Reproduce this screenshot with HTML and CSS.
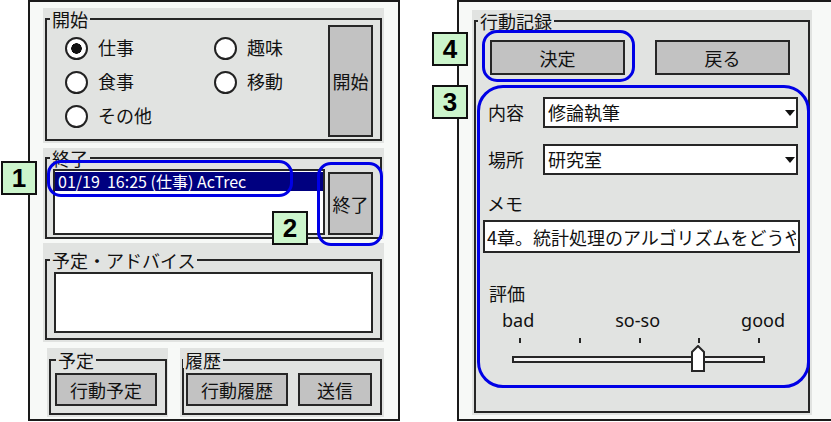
FILE: index.html
```html
<!DOCTYPE html>
<html lang="ja">
<head>
<meta charset="utf-8">
<title>行動記録</title>
<link rel="stylesheet" href="styles.css">
</head>
<body>
<div class="screen">

	<!-- メイン画面 -->
	<div class="panel left">
		<div class="grp start">
			<fieldset>
				<legend>開始</legend>
				<div class="startbody">
					<div class="radios">
						<label class="opt"><input type="radio" name="act" checked>仕事</label>
						<label class="opt"><input type="radio" name="act">趣味</label>
						<label class="opt"><input type="radio" name="act">食事</label>
						<label class="opt"><input type="radio" name="act">移動</label>
						<label class="opt"><input type="radio" name="act">その他</label>
					</div>
					<button class="btn tall">開始</button>
				</div>
			</fieldset>
		</div>

		<div class="grp end">
			<fieldset>
				<legend>終了</legend>
				<div class="endbody">
					<div class="list">
						<div class="sel">01/19  16:25 (仕事) AcTrec</div>
					</div>
					<button class="btn stop">終了</button>
				</div>
			</fieldset>
		</div>

		<div class="grp advice">
			<fieldset>
				<legend>予定・アドバイス</legend>
				<div class="note"></div>
			</fieldset>
		</div>

		<div class="bottomrow">
			<div class="grp plan">
				<fieldset>
					<legend>予定</legend>
					<button class="btn wide">行動予定</button>
				</fieldset>
			</div>
			<div class="grp hist">
				<fieldset>
					<legend>履歴</legend>
					<div class="btnrow">
						<button class="btn wide">行動履歴</button>
						<button class="btn send">送信</button>
					</div>
				</fieldset>
			</div>
		</div>
	</div>

	<!-- 行動記録画面 -->
	<div class="panel right">
		<div class="grp record">
			<fieldset>
				<legend>行動記録</legend>
				<div class="topbtns">
					<button class="btn big">決定</button>
					<button class="btn big">戻る</button>
				</div>

				<div class="field first">
					<span class="lbl">内容</span>
					<div class="combo"><span>修論執筆</span><span class="arrow"></span></div>
				</div>
				<div class="field second">
					<span class="lbl">場所</span>
					<div class="combo"><span>研究室</span><span class="arrow"></span></div>
				</div>

				<div class="cap memo-cap">メモ</div>
				<input class="memo" type="text" value="4章。統計処理のアルゴリズムをどうやって実装するか検討">

				<div class="cap eval-cap">評価</div>
				<div class="scale">
					<span>bad</span><span>so-so</span><span>good</span>
				</div>
				<div class="ticks">
					<i></i><i></i><i></i><i></i><i></i>
				</div>
				<div class="track">
					<svg class="thumb" width="14" height="27" viewBox="0 0 14 27">
						<polygon points="7,1 13,7 13,26 1,26 1,7" fill="#fff" stroke="#262626" stroke-width="2"/>
					</svg>
				</div>
			</fieldset>
		</div>
	</div>
</div>

<!-- 注釈 -->
<div class="ring r1"></div>
<div class="ring r2"></div>
<div class="ring r3"></div>
<div class="ring r4"></div>
<div class="tag t1">1</div>
<div class="tag t2">2</div>
<div class="tag t3">3</div>
<div class="tag t4">4</div>
</body>
</html>
```

FILE: styles.css
```css
* {
	box-sizing: border-box;
}

html, body {
	margin: 0;
}

body {
	position: relative;
	width: 831px;
	height: 422px;
	overflow: hidden;
	background: #fff;
	font-family: "Noto Sans CJK JP", "Noto Sans", sans-serif;
	font-size: 18px;
	line-height: 1.2;
	color: #111;
}

.screen {
	display: flex;
	gap: 57px;
	padding-left: 28px;
}

.panel {
	flex: none;
	height: 421px;
	border: 2px solid #1a1a1a;
	background: #f7f9f7;
}

.panel.left {
	width: 372px;
	padding: 6px 14px 0 13px;
	display: flex;
	flex-direction: column;
}

.panel.right {
	width: 380px;
	border-right: none;
	padding: 8px 0 0 13px;
}

/* グループ枠 */
.grp {
	background: #e1e3e1;
	padding: 3px 2px 2px 2px;
}

fieldset {
	margin: 0;
	min-width: 0;
	border: 2px solid #262626;
	padding: 0 7px 0 6px;
}

legend {
	padding: 0 2px;
	margin-left: -3px;
	font-size: 18px;
	line-height: 16px;
}

.btn {
	font-family: inherit;
	font-size: 18px;
	line-height: 1;
	color: #111;
	background: #c2c2c2;
	border: 2px solid #262626;
	border-radius: 0;
	padding: 0;
}

/* 開始 */
.startbody {
	display: flex;
	height: 112px;
}

.radios {
	flex: 1;
	display: grid;
	grid-template-columns: 149px auto;
	grid-auto-rows: 34px;
	align-content: start;
	padding: 4px 0 0 12px;
}

.opt {
	display: flex;
	align-items: center;
	gap: 10px;
}

.opt input {
	appearance: none;
	margin: 0;
	width: 23px;
	height: 23px;
	border: 2px solid #222;
	border-radius: 50%;
	background: #fff;
}

.opt input:checked {
	background: radial-gradient(circle, #111 0 5px, #fff 5.5px);
}

.btn.tall {
	width: 45px;
	margin: -2px 0 2px 0;
}

/* 終了 */
.grp.end {
	margin-top: 5px;
	padding-top: 2px;
	padding-bottom: 0;
}

.endbody {
	display: flex;
	align-items: flex-end;
	gap: 3px;
	padding-bottom: 2px;
}

.list {
	width: 272px;
	height: 66px;
	margin-top: 3px;
	border: 2px solid #262626;
	background: #fff;
	padding-top: 1px;
}

.list .sel {
	height: 19px;
	background: #000080;
	color: #fff;
	font-size: 16px;
	line-height: 19px;
	padding-left: 3px;
	white-space: pre;
}

.btn.stop {
	width: 45px;
	height: 63px;
}

/* 予定・アドバイス */
.grp.advice {
	margin-top: 4px;
	padding-top: 9px;
}

.grp.advice fieldset {
	padding-bottom: 5px;
}

.note {
	height: 61px;
	margin: 4px 0 0 1px;
	border: 2px solid #262626;
	background: #fff;
}

/* 予定 / 履歴 */
.bottomrow {
	display: flex;
	gap: 12px;
	margin-top: 6px;
	padding-left: 4px;
}

.grp.plan {
	width: 121px;
	padding: 4px 1px 2px 2px;
}

.grp.plan fieldset {
	padding: 0 8px 7px 4px;
}

.grp.plan legend {
	margin-left: 1px;
}

.grp.hist {
	width: 204px;
	padding: 4px 2px 2px 2px;
}

.grp.hist fieldset {
	padding: 0 8px 7px 2px;
}

.btnrow {
	display: flex;
	gap: 10px;
}

.btn.wide {
	width: 102px;
	height: 33px;
	margin-top: 5px;
}

.btn.send {
	width: 74px;
	height: 33px;
	margin-top: 5px;
}

/* 行動記録 */
.grp.record {
	width: 340px;
	height: 405px;
}

.grp.record fieldset {
	height: 100%;
	padding: 0 10px 0 7px;
}

.grp.record legend {
	margin-left: -5px;
}

.topbtns {
	display: flex;
	gap: 30px;
	margin-top: 11px;
	padding-left: 7px;
}

.btn.big {
	width: 135px;
	height: 35px;
}

.field {
	display: flex;
	align-items: center;
	padding-left: 5px;
}

.field.first {
	margin-top: 22px;
}

.field.second {
	margin-top: 16px;
}

.lbl {
	width: 55px;
}

.combo {
	display: flex;
	align-items: center;
	justify-content: space-between;
	width: 255px;
	height: 31px;
	border: 2px solid #262626;
	background: #fff;
	padding: 0 1px 0 3px;
}

.arrow {
	width: 0;
	height: 0;
	border-left: 5px solid transparent;
	border-right: 5px solid transparent;
	border-top: 6px solid #111;
}

.cap {
	line-height: 24px;
	padding-left: 4px;
}

.memo-cap {
	margin-top: 16px;
}

.memo {
	display: block;
	width: 317px;
	height: 33px;
	margin-top: 5px;
	border: 2px solid #262626;
	border-radius: 0;
	background: #fff;
	padding: 0 2px;
	font-family: inherit;
	font-size: 18px;
	color: #111;
	outline: none;
}

.eval-cap {
	margin-top: 28px;
	padding-left: 6px;
}

.scale {
	display: flex;
	justify-content: space-between;
	width: 283px;
	margin: 4px 0 0 19px;
	font-family: "Noto Sans", sans-serif;
	line-height: 22px;
}

.ticks {
	display: flex;
	justify-content: space-between;
	width: 241px;
	height: 5px;
	margin: 7px 0 0 36px;
}

.ticks i {
	width: 2px;
	height: 5px;
	background: #262626;
}

.track {
	position: relative;
	width: 253px;
	height: 7px;
	margin: 13px 0 0 29px;
	border: 2px solid #262626;
	background: #f4f4f4;
}

.thumb {
	position: absolute;
	left: 177px;
	top: -13px;
}

/* 注釈の枠と番号 */
.ring {
	position: absolute;
	border: 3px solid #0000e6;
	border-radius: 14px;
}

.r1 { left: 47px; top: 160px; width: 246px; height: 37px; }
.r2 { left: 317px; top: 162px; width: 66px; height: 84px; }
.r3 { left: 477px; top: 85px; width: 333px; height: 303px; border-radius: 26px; }
.r4 { left: 482px; top: 30px; width: 153px; height: 52px; border-radius: 15px; }

.tag {
	position: absolute;
	width: 36px;
	height: 34px;
	border: 2px solid #111;
	background: #ccf5cc;
	font-family: "Liberation Sans", Arial, sans-serif;
	font-weight: bold;
	font-size: 26px;
	line-height: 30px;
	text-align: center;
	color: #000;
}

.t1 { left: 1px; top: 161px; }
.t2 { left: 272px; top: 211px; }
.t3 { left: 432px; top: 85px; }
.t4 { left: 432px; top: 32px; }
```
